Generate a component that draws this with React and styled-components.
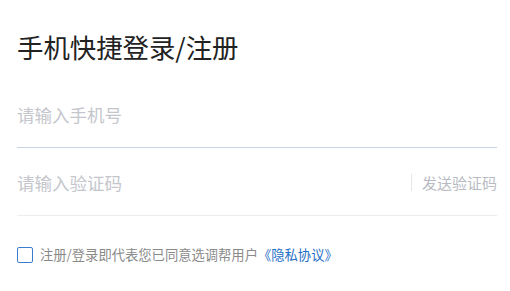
import React, { useState } from 'react';
import { styled, createGlobalStyle } from 'styled-components';

const GlobalStyle = createGlobalStyle`
  body {
    margin: 0;
    background: #fff;
    font-family: "Noto Sans CJK SC", "Noto Sans", sans-serif;
  }
`;

const Page = styled.div`
  width: 480px;
  padding: 29px 13px 0 17px;
`;

const Title = styled.h1`
  margin: 0 0 15px;
  font-size: 26.4px;
  line-height: 36px;
  font-weight: 400;
  color: #222;
`;

const Field = styled.div`
  display: flex;
  align-items: center;
  padding-top: 2px;
  box-sizing: border-box;
  height: 68px;
  border-bottom: 1px solid ${props => (props.active ? '#c3d6e8' : '#ededed')};
`;

const Input = styled.input`
  flex: 1;
  min-width: 0;
  border: none;
  outline: none;
  padding: 0;
  background: transparent;
  font-family: inherit;
  font-size: 17.5px;
  color: #333;
  &::placeholder {
    color: #c4c6cc;
  }
`;

const SendCode = styled.button`
  display: flex;
  align-items: center;
  border: none;
  background: none;
  padding: 0;
  font-family: inherit;
  font-size: 15px;
  color: #b8bbc2;
  cursor: pointer;
  &::before {
    content: '';
    width: 1px;
    height: 17px;
    background: #e6e6e6;
    margin-right: 10px;
  }
`;

const Agreement = styled.label`
  display: flex;
  align-items: center;
  margin-top: 29px;
  font-size: 13.3px;
  color: #8a8a8a;
  cursor: pointer;
`;

const Box = styled.span`
  width: 16px;
  height: 16px;
  box-sizing: border-box;
  border: 1.5px solid #3b7ccc;
  border-radius: 2px;
  margin-right: 7px;
  background: ${props => (props.checked ? '#3b7ccc' : '#fff')};
`;

const Link = styled.a`
  color: #1f6fc4;
  text-decoration: none;
`;

export default function App() {
  const [checked, setChecked] = useState(false);
  return (
    <>
      <GlobalStyle />
      <Page>
        <Title>手机快捷登录/注册</Title>
        <Field active>
          <Input placeholder="请输入手机号" />
        </Field>
        <Field>
          <Input placeholder="请输入验证码" />
          <SendCode>发送验证码</SendCode>
        </Field>
        <Agreement onClick={() => setChecked(!checked)}>
          <Box checked={checked} />
          注册/登录即代表您已同意选调帮用户<Link href="#">《隐私协议》</Link>
        </Agreement>
      </Page>
    </>
  );
}
